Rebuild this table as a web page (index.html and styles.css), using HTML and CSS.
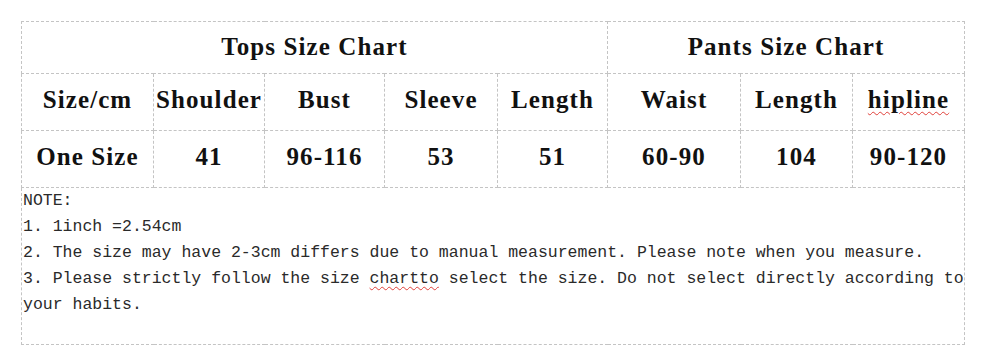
FILE: index.html
```html
<!DOCTYPE html>
<html lang="en">
<head>
<meta charset="utf-8">
<title>Size Chart</title>
<link rel="stylesheet" href="styles.css">
</head>
<body>
<div class="page">
  <table class="chart">
    <colgroup>
      <col class="c1"><col class="c2"><col class="c3"><col class="c4"><col class="c5"><col class="c6"><col class="c7"><col class="c8">
    </colgroup>
    <tr class="r-title">
      <td colspan="5">Tops Size Chart</td>
      <td colspan="3">Pants Size Chart</td>
    </tr>
    <tr class="r-head">
      <td>Size/cm</td>
      <td>Shoulder</td>
      <td>Bust</td>
      <td>Sleeve</td>
      <td>Length</td>
      <td>Waist</td>
      <td>Length</td>
      <td><span class="spell">hipline</span></td>
    </tr>
    <tr class="r-data">
      <td>One Size</td>
      <td>41</td>
      <td>96-116</td>
      <td>53</td>
      <td>51</td>
      <td>60-90</td>
      <td>104</td>
      <td>90-120</td>
    </tr>
    <tr class="r-note">
      <td colspan="8">
        <div class="note">
          <div class="line">NOTE:</div>
          <div class="line">1. 1inch =2.54cm</div>
          <div class="line">2. The size may have 2-3cm differs due to manual measurement. Please note when you measure.</div>
          <div class="line">3. Please strictly follow the size <span class="spell">chartto</span> select the size. Do not select directly according to</div>
          <div class="line">your habits.</div>
        </div>
      </td>
    </tr>
  </table>
</div>
</body>
</html>
```
FILE: styles.css
```css
html, body {
  margin: 0;
  padding: 0;
  background: #ffffff;
}

.page {
  padding: 21px 0 0 21px;
}

.chart {
  border-collapse: collapse;
  table-layout: fixed;
  width: 943px;
  color: #111;
}

.chart td {
  border: 1px dashed #c4c4c4;
  padding: 0;
  text-align: center;
  vertical-align: middle;
  font-family: "Liberation Serif", "DejaVu Serif", serif;
  font-weight: bold;
  font-size: 25px;
  letter-spacing: 1.1px;
  white-space: nowrap;
}

.c1 { width: 132px; }
.c2 { width: 111px; }
.c3 { width: 120px; }
.c4 { width: 113px; }
.c5 { width: 110px; }
.c6 { width: 133px; }
.c7 { width: 112px; }
.c8 { width: 112px; }

.r-title td { height: 49px; padding-bottom: 2px; }
.r-head td { height: 52px; padding-bottom: 4px; }
.r-data td { height: 52px; padding-bottom: 4px; }

.r-note td {
  height: 156px;
  text-align: left;
  vertical-align: top;
  font-family: "Liberation Mono", "DejaVu Sans Mono", monospace;
  font-weight: normal;
  letter-spacing: 0;
}

.note {
  display: flex;
  flex-direction: column;
  font-size: 16.5px;
  line-height: 26px;
  color: #2a2a2a;
  padding-left: 1px;
}

.line {
  white-space: nowrap;
}

.spell {
  text-decoration: underline wavy #e0403a;
  text-decoration-thickness: 1px;
  text-underline-offset: 3px;
}
```
